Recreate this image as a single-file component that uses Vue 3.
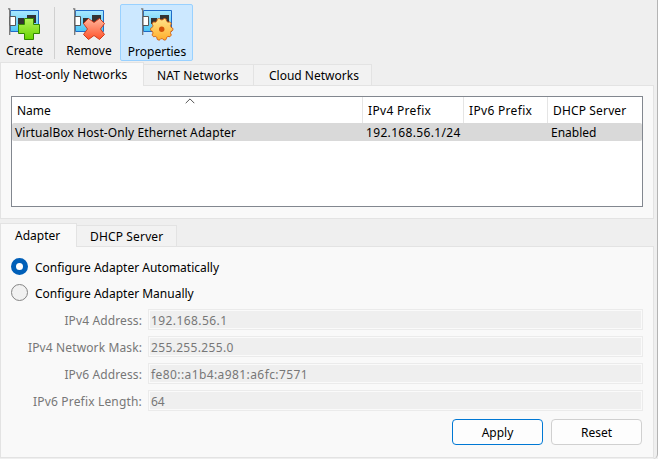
<script setup>
import { ref } from 'vue'

const tools = [
  { id: 'create', label: 'Create' },
  { id: 'remove', label: 'Remove' },
  { id: 'properties', label: 'Properties' },
]
const mode = ref('auto')
const fields = [
  { label: 'IPv4 Address:', value: '192.168.56.1', k: 'a' },
  { label: 'IPv4 Network Mask:', value: '255.255.255.0', k: 'b' },
  { label: 'IPv6 Address:', value: 'fe80::a1b4:a981:a6fc:7571', k: 'c' },
  { label: 'IPv6 Prefix Length:', value: '64', k: 'd' },
]
const gear = Array.from({ length: 120 }, (_, i) => {
  const a = (i / 120) * Math.PI * 2
  const r = 10.3 + 0.9 * Math.tanh(2 * Math.cos(a * 10))
  return `${(20.7 + r * Math.cos(a)).toFixed(2)},${(21.3 + r * Math.sin(a)).toFixed(2)}`
}).join(' ')
</script>

<template>
  <div class="window">
    <div class="toolbar">
      <div v-for="t in tools" :key="t.id" class="tool" :class="t.id">
        <svg class="icon" width="34" height="34" viewBox="0 0 34 34">
          <defs>
            <linearGradient :id="t.id + 'card'" x1="0" y1="0" x2="0" y2="1">
              <stop offset="0" stop-color="#a9e8ff" /><stop offset="1" stop-color="#4cc5f4" />
            </linearGradient>
            <linearGradient :id="t.id + 'mark'" x1="0" y1="0" x2="0" y2="1">
              <template v-if="t.id === 'create'"><stop offset="0" stop-color="#b5f25c" /><stop offset="1" stop-color="#66d400" /></template>
              <template v-else-if="t.id === 'remove'"><stop offset="0" stop-color="#ffb59c" /><stop offset="1" stop-color="#ff5229" /></template>
              <template v-else><stop offset="0" stop-color="#ffe38a" /><stop offset="1" stop-color="#ffae2b" /></template>
            </linearGradient>
          </defs>
          <path d="M2.5 2.5H30.5V23.5H2.5Z" :fill="`url(#${t.id}card)`" stroke="#206bc7" />
          <path d="M0 .8H1.7V27" fill="none" stroke="#777" stroke-width="1.3" />
          <path d="M2 8.5H7.5V17.5H2Z" fill="#fff" stroke="#555" />
          <path d="M10 10H16V16H10ZM19 7H28V15H19Z" fill="#333" />
          <path v-if="t.id === 'create'" d="M16.5 10.5H25.5V16.5H31.5V25.5H25.5V31.5H16.5V25.5H10.5V16.5H16.5Z" :fill="`url(#${t.id}mark)`" stroke="#318500" />
          <path v-else-if="t.id === 'remove'" d="M15.5 10.5L21 14.5L26.5 10.5L31.5 15.5L27.5 21L31.5 26.5L26.5 31.5L21 27.5L15.5 31.5L10.5 26.5L14.5 21L10.5 15.5Z" :fill="`url(#${t.id}mark)`" stroke="#d13b1a" stroke-linejoin="round" />
          <g v-else>
            <polygon :points="gear" :fill="`url(#${t.id}mark)`" stroke="#d45b0c" stroke-linejoin="round" />
            <circle cx="20.7" cy="21.3" r="2.7" fill="#d35208" />
          </g>
        </svg>
        <span>{{ t.label }}</span>
      </div>
    </div>

    <div class="tabs top-tabs">
      <div class="tab active t1"><span>Host-only Networks</span></div>
      <div class="tab t2"><span>NAT Networks</span></div>
      <div class="tab t3"><span>Cloud Networks</span></div>
    </div>
    <div class="pane networks">
      <div class="table">
        <div class="row head">
          <div><svg class="sort" width="10" height="6" viewBox="0 0 10 6"><path d="M.7 5.2L5 .9L9.3 5.2" fill="none" stroke="#555" /></svg><span>Name</span></div>
          <div><span class="prefix">IPv4 Prefix</span></div>
          <div><span class="prefix">IPv6 Prefix</span></div>
          <div><span class="server">DHCP Server</span></div>
        </div>
        <div class="row item">
          <div><span class="name">VirtualBox Host-Only Ethernet Adapter</span></div>
          <div><span class="addr">192.168.56.1/24</span></div>
          <div></div>
          <div><span>Enabled</span></div>
        </div>
      </div>
    </div>

    <div class="tabs low-tabs">
      <div class="tab active t4"><span>Adapter</span></div>
      <div class="tab t5"><span>DHCP Server</span></div>
    </div>
    <div class="pane details">
      <div class="radio" @click="mode = 'auto'"><i :class="{ on: mode === 'auto' }"></i><span>Configure Adapter Automatically</span></div>
      <div class="radio" @click="mode = 'manual'"><i :class="{ on: mode === 'manual' }"></i><span>Configure Adapter Manually</span></div>
      <div class="form">
        <div v-for="f in fields" :key="f.k" class="field">
          <span class="label"><span :class="'l' + f.k">{{ f.label }}</span></span>
          <div class="box"><span :class="'v' + f.k">{{ f.value }}</span></div>
        </div>
      </div>
      <div class="buttons">
        <div class="button primary">Apply</div>
        <div class="button">Reset</div>
      </div>
    </div>
  </div>
</template>

<style>
body { margin: 0; background: #efefef; }
</style>
<style scoped>
* { box-sizing: border-box; }
.window { width: 658px; height: 459px; background: #efefef; border-right: 1px solid #b4b4b4; border-bottom-right-radius: 5px; font: 12px/16px "Noto Sans", sans-serif; color: #000; overflow: hidden; white-space: nowrap; }
.toolbar { height: 63px; display: flex; padding: 4px 0 0; }
.tool { height: 57px; display: flex; flex-direction: column; align-items: center; padding-top: 3px; border: 1px solid transparent; }
.tool span { margin-top: 1px; }
.icon { display: block; flex: none; }
.create { width: 49px; }
.create .icon { align-self: flex-start; margin-left: 7px; }
.remove { width: 60px; margin-left: 10px; position: relative; }
.remove .icon { align-self: flex-start; margin-left: 13px; }
.remove::before { content: ""; position: absolute; left: -6px; top: 2px; width: 1px; height: 52px; background: #d0d0d0; }
.properties { width: 73px; margin-left: 1px; background: #cce8ff; border-color: #99d1ff; border-radius: 2px; }
.properties .icon { align-self: flex-start; margin-left: 20px; }
.properties span { margin: 2px 0 0 1px; }
.tabs { display: flex; align-items: flex-end; }
.top-tabs { height: 22px; }
.low-tabs { height: 23px; margin-top: 4px; }
.tab { height: 21px; padding: 3px 0 0 13px; background: #f2f2f2; border: 1px solid #e3e3e3; border-bottom: 0; border-left: 0; }
.active { height: 24px; margin-bottom: -1px; position: relative; background: #f9f9f9; border-left: 1px solid #e3e3e3; padding: 4px 0 0 14px; }
.t1 { width: 144px; letter-spacing: .06px; }
.t2 { width: 110px; letter-spacing: .15px; }
.t3 { width: 118px; padding-left: 15px; }
.t4 { width: 77px; }
.t5 { width: 100px; letter-spacing: .15px; }
.pane { width: 654px; background: #f9f9f9; border: 1px solid #e3e3e3; }
.networks { height: 134px; padding: 10px; }
.table { width: 632px; height: 111px; background: #fff; border: 1px solid #82878f; }
.row { display: grid; grid-template-columns: 351px 101px 84px 94px; }
.head { height: 26px; }
.head > div { padding: 6px 0 0 5px; border-right: 1px solid #e5e5e5; position: relative; }
.head > div:last-child { border-right: 0; }
.prefix { letter-spacing: .32px; }
.server { letter-spacing: .15px; }
.sort { position: absolute; left: 173px; top: 1px; }
.item { height: 18px; padding-top: 2px; background: #d9d9d9; border-radius: 2px; }
.item > div { padding-left: 3px; }
.name { letter-spacing: .1px; }
.addr { letter-spacing: .34px; }
.details { height: 212px; padding: 7px 10px 0; }
.radio { height: 26px; display: flex; align-items: center; }
.radio span { padding-top: 2px; }
.radio i { width: 17px; height: 17px; margin: -1px 7px 0 0; border: 1px solid #858585; border-radius: 50%; background: #f1f1f1; }
.radio i.on { border: 5px solid #005fb8; background: #fff; }
.form { margin-top: 3px; display: grid; gap: 6px; }
.field { height: 21px; display: flex; color: #777; }
.label { width: 131px; margin-right: 6px; padding-top: 4px; text-align: right; letter-spacing: .12px; }
.ld { letter-spacing: .17px; }
.box { width: 495px; height: 21px; border: 1px solid #ebebeb; padding: 3px 0 0 2px; background: #efefef; box-shadow: inset 0 0 0 1px #fafafa; }
.va { letter-spacing: .42px; }
.vb { letter-spacing: .34px; }
.vc { letter-spacing: .41px; }
.buttons { display: flex; justify-content: flex-end; gap: 8px; margin: 8px 1px 0 0; }
.button { width: 91px; height: 26px; line-height: 26px; text-align: center; background: #fdfdfd; border: 1px solid #d0d0d0; border-radius: 4px; }
.primary { border-color: #0078d4; }
</style>
